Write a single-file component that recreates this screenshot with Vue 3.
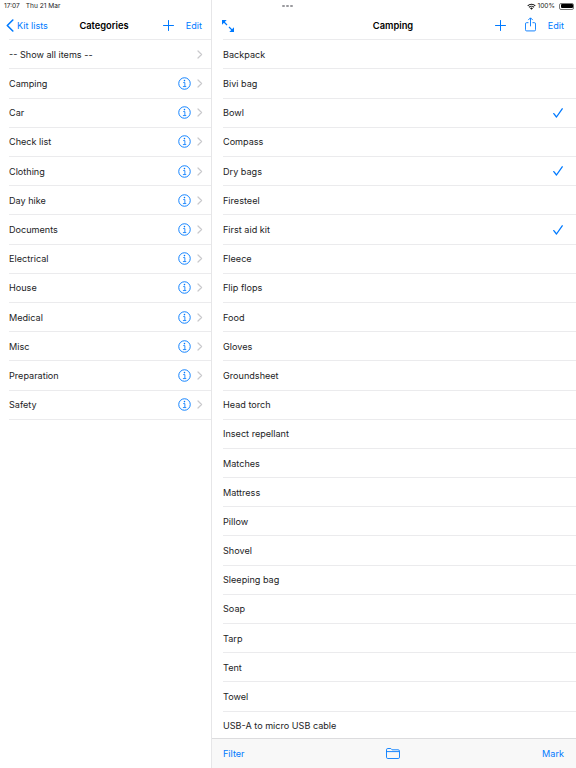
<template>
  <div class="screen">
    <aside class="sidebar">
      <div class="status">
        <span>17:07</span>
        <span class="date">Thu 21 Mar</span>
      </div>
      <header class="nav nav-left">
        <a class="back">
          <svg width="8" height="13" viewBox="0 0 8 13"><path d="M6.800 1 1.300 6.500l5.500 5.500" fill="none" stroke="#007aff" stroke-width="1.600" stroke-linecap="round" stroke-linejoin="round"/></svg>
          <span>Kit lists</span>
        </a>
        <span class="title">Categories</span>
        <div class="actions">
          <svg class="plus" width="11" height="11" viewBox="0 0 11 11"><path d="M5.500 .5v10M.5 5.500h10" stroke="#007aff" stroke-width="1" stroke-linecap="round"/></svg>
          <a class="link">Edit</a>
        </div>
      </header>
      <ul class="list">
        <li v-for="(cat, i) in categories" :key="cat" class="row">
          <span class="label">{{ cat }}</span>
          <svg v-if="i > 0" class="info" width="13" height="13" viewBox="0 0 14 14">
            <circle cx="7" cy="7" r="6.200" fill="none" stroke="#007aff" stroke-width="1"/>
            <circle cx="7" cy="3.900" r=".85" fill="#007aff"/>
            <path d="M5.600 6h1.800v4.200M5.300 10.300h3.600" fill="none" stroke="#007aff" stroke-width=".9"/>
          </svg>
          <svg class="chev" width="6" height="9" viewBox="0 0 6 9"><path d="M1 1l3.600 3.500L1 8" fill="none" stroke="#c9c9cc" stroke-width="1.200" stroke-linecap="round" stroke-linejoin="round"/></svg>
        </li>
      </ul>
    </aside>

    <main class="detail">
      <div class="status status-right">
        <span class="dots"><i></i><i></i><i></i></span>
        <span class="status-icons">
          <svg width="9" height="7" viewBox="0 0 11 8"><path d="M.4 2.800a7.200 7.200 0 0 1 10.200 0l-.9.9a6 6 0 0 0-8.400 0zM2 4.500a4.900 4.900 0 0 1 7 0l-.9.9a3.600 3.600 0 0 0-5.200 0zM3.700 6.200a2.500 2.500 0 0 1 3.600 0L5.500 8z" fill="#111"/></svg>
          <span>100%</span>
          <span class="battery"><b></b></span>
        </span>
      </div>
      <header class="nav nav-right">
        <div>
          <svg class="expand" width="12" height="12" viewBox="0 0 12 12">
            <path d="M0 0h4.700L0 4.700zM12 12H7.300L12 7.300z" fill="#007aff"/>
            <path d="M1.500 1.500 5 5M10.500 10.500 7 7" stroke="#007aff" stroke-width="1.200"/>
          </svg>
        </div>
        <span class="title">Camping</span>
        <div class="actions">
          <svg class="plus" width="11" height="11" viewBox="0 0 11 11"><path d="M5.500 .5v10M.5 5.500h10" stroke="#007aff" stroke-width="1" stroke-linecap="round"/></svg>
          <svg class="share" width="11" height="15" viewBox="0 0 12 16">
            <path d="M3.800 6H1.800A1.300 1.300 0 0 0 .5 7.300v6.400A1.300 1.300 0 0 0 1.800 15h8.400a1.300 1.300 0 0 0 1.300-1.300V7.300A1.300 1.300 0 0 0 10.200 6H8.200" fill="none" stroke="#007aff" stroke-width="1"/>
            <path d="M6 10V.9M3.500 3.200 6 .7l2.500 2.500" fill="none" stroke="#007aff" stroke-width="1"/>
          </svg>
          <a class="link">Edit</a>
        </div>
      </header>
      <ul class="list list-right">
        <li v-for="item in items" :key="item.name" class="row row-right">
          <span class="label">{{ item.name }}</span>
          <svg v-if="item.done" class="check" width="10" height="10" viewBox="0 0 10 10"><path d="M.8 5.600 3.500 9 9.200.8" fill="none" stroke="#007aff" stroke-width="1.300" stroke-linecap="round" stroke-linejoin="round"/></svg>
        </li>
      </ul>
      <footer class="toolbar">
        <a class="link">Filter</a>
        <svg width="14" height="11" viewBox="0 0 14 11">
          <path d="M.5 2V1.800A1.300 1.300 0 0 1 1.800.5h3l1.300 1.300h6a1.400 1.400 0 0 1 1.400 1.400v6A1.300 1.300 0 0 1 12.200 10.500H1.800A1.300 1.300 0 0 1 .5 9.200zM.5 3.600h13" fill="none" stroke="#007aff" stroke-width=".9"/>
        </svg>
        <a class="link">Mark</a>
      </footer>
    </main>
  </div>
</template>

<script setup>
const categories = [
  '-- Show all items --', 'Camping', 'Car', 'Check list', 'Clothing', 'Day hike',
  'Documents', 'Electrical', 'House', 'Medical', 'Misc', 'Preparation', 'Safety'
]

const checked = ['Bowl', 'Dry bags', 'First aid kit']

const items = [
  'Backpack', 'Bivi bag', 'Bowl', 'Compass', 'Dry bags', 'Firesteel', 'First aid kit',
  'Fleece', 'Flip flops', 'Food', 'Gloves', 'Groundsheet', 'Head torch', 'Insect repellant',
  'Matches', 'Mattress', 'Pillow', 'Shovel', 'Sleeping bag', 'Soap', 'Tarp', 'Tent', 'Towel',
  'USB-A to micro USB cable'
].map(name => ({ name, done: checked.includes(name) }))
</script>

<style>
html, body {
  margin: 0;
  background: #fff;
}
</style>

<style scoped>
.screen {
  display: flex;
  width: 576px;
  height: 768px;
  overflow: hidden;
  font-family: Inter, "Liberation Sans", sans-serif;
  font-size: 9.100px;
  color: #1c1c1e;
  background: #fff;
}

.sidebar {
  width: 211px;
  flex: none;
  border-right: 1px solid #e6e6e8;
}

.detail {
  flex: 1;
  min-width: 0;
  display: flex;
  flex-direction: column;
}

.status {
  height: 12px;
  display: flex;
  align-items: center;
  padding: 0 4px;
  font-size: 6.600px;
  line-height: 12px;
}

.date {
  margin-left: 6px;
}

.status-right {
  justify-content: space-between;
  padding: 0 2px 0 70px;
}

.dots {
  display: flex;
  gap: 1.500px;
}

.dots i {
  width: 2.500px;
  height: 2.500px;
  border-radius: 50%;
  background: #9a9a9e;
}

.status-icons {
  display: flex;
  align-items: center;
  gap: 2px;
}

.battery {
  width: 15px;
  height: 7px;
  border: 1px solid #777;
  border-radius: 2px;
  box-sizing: border-box;
  padding: .5px;
  margin-left: 2px;
  display: block;
}

.battery b {
  display: block;
  height: 100%;
  background: #000;
  border-radius: 1px;
}

.nav {
  height: 27.300px;
  display: grid;
  grid-template-columns: 1fr auto 1fr;
  align-items: center;
  box-sizing: border-box;
}

.nav svg {
  display: block;
}

.nav-left {
  padding: 0 9px 0 6px;
}

.nav-right {
  padding: 0 12px 0 10px;
}

.back {
  display: flex;
  align-items: center;
  gap: 3px;
  color: #007aff;
}

.title {
  font-size: 9.300px;
  font-weight: 600;
  color: #000;
}

.actions {
  display: flex;
  align-items: center;
  justify-content: flex-end;
}

.plus {
  margin-right: 12px;
}

.nav-right .plus {
  margin-right: 19px;
}

.share {
  margin-right: 12px;
  margin-top: -2px;
}

.link {
  color: #007aff;
}

.list {
  list-style: none;
  margin: 0;
  padding: 0;
}

.list-right {
  flex: 1;
  min-height: 0;
  overflow: hidden;
}

.row {
  height: 29.200px;
  box-sizing: border-box;
  display: flex;
  align-items: center;
  margin-left: 9px;
  padding-right: 8.500px;
  border-top: 1px solid #ebebed;
}

.row:last-child {
  border-bottom: 1px solid #ebebed;
  height: 30.200px;
}

.row-right {
  margin-left: 11px;
  padding-right: 13px;
}

.row-right:last-child {
  border-bottom: none;
  height: 29.200px;
}

.label {
  flex: 1;
}

.info {
  margin-right: 5.500px;
}

.toolbar {
  height: 29px;
  flex: none;
  display: flex;
  align-items: center;
  justify-content: space-between;
  padding: 0 12px 0 11px;
  background: #f8f8f8;
  border-top: 1px solid #dcdcde;
}
</style>
